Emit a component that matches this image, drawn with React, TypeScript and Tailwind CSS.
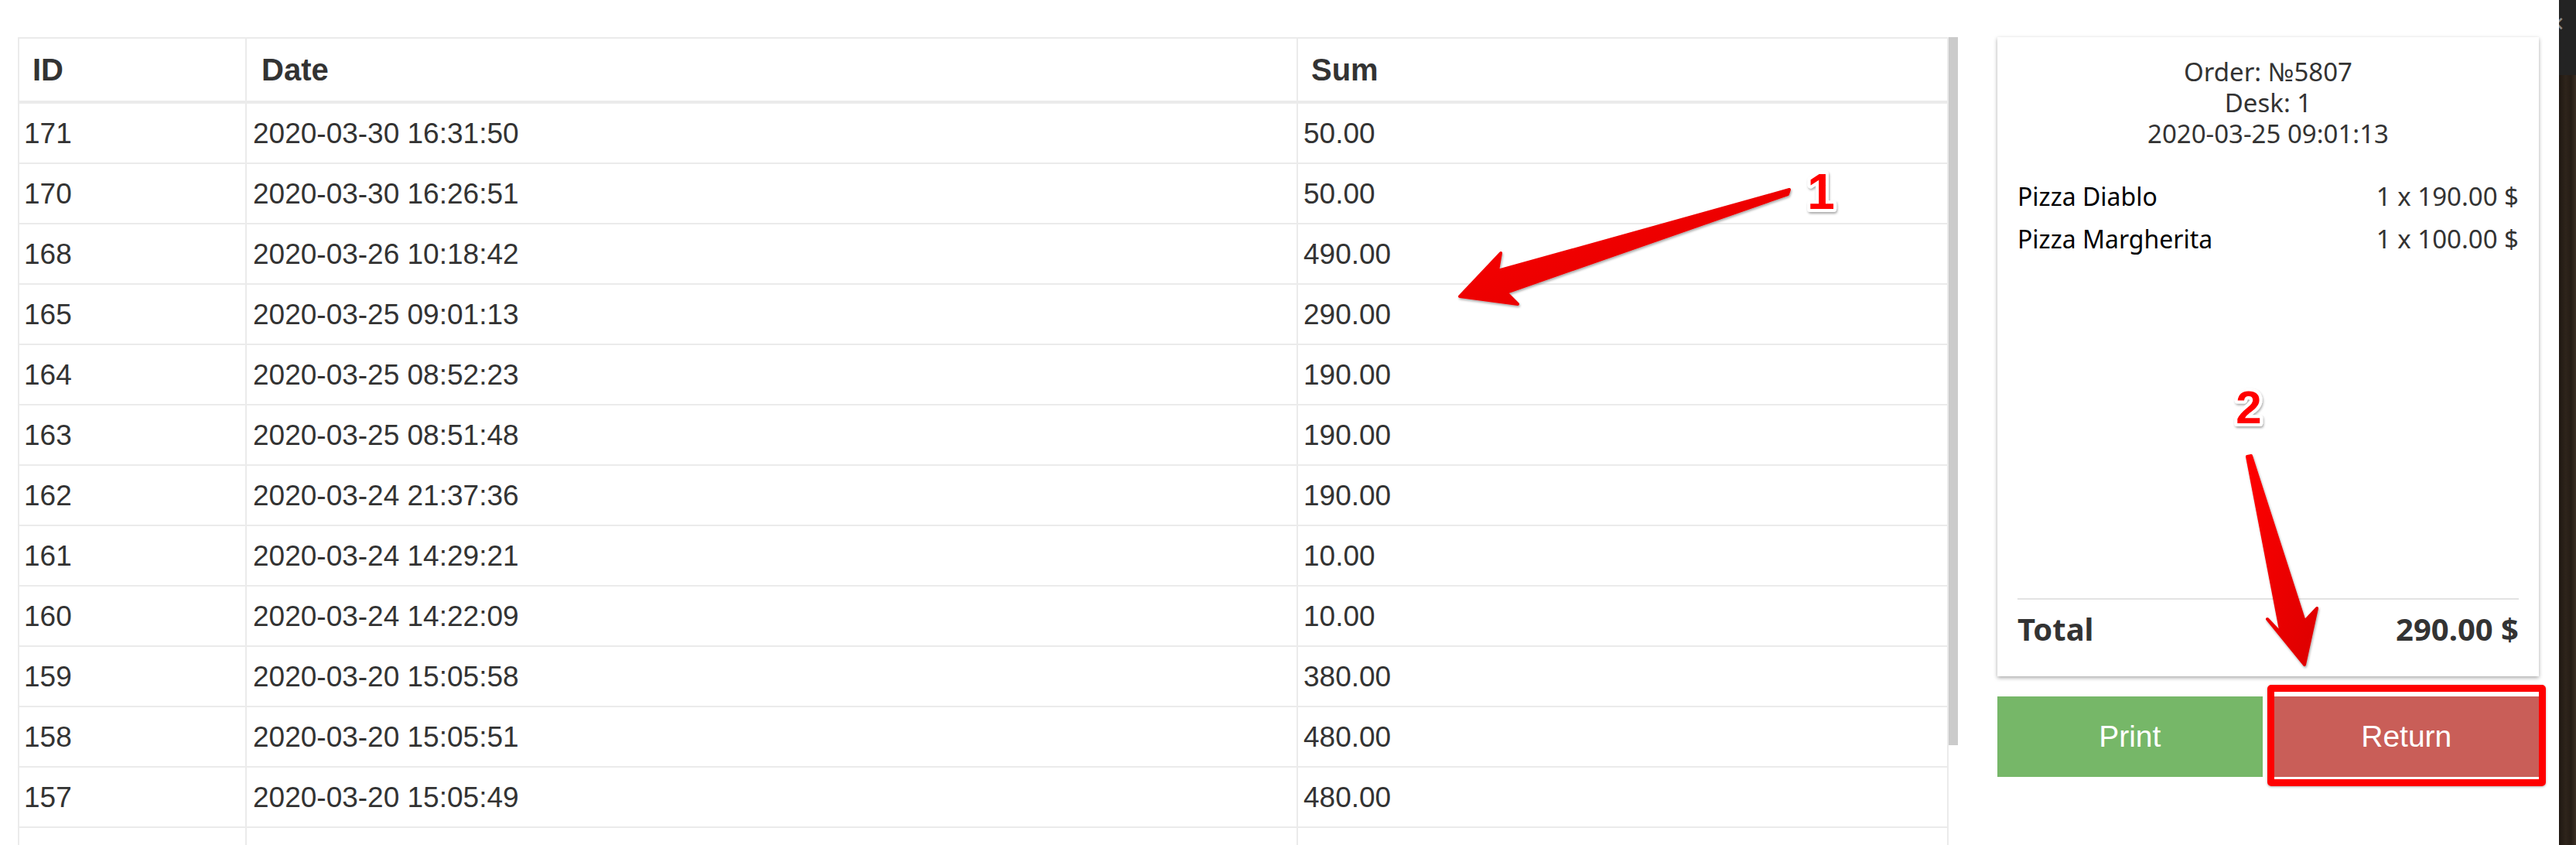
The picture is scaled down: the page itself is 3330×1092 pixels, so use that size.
const rows = [
  { id: '171', date: '2020-03-30 16:31:50', sum: '50.00' },
  { id: '170', date: '2020-03-30 16:26:51', sum: '50.00' },
  { id: '168', date: '2020-03-26 10:18:42', sum: '490.00' },
  { id: '165', date: '2020-03-25 09:01:13', sum: '290.00' },
  { id: '164', date: '2020-03-25 08:52:23', sum: '190.00' },
  { id: '163', date: '2020-03-25 08:51:48', sum: '190.00' },
  { id: '162', date: '2020-03-24 21:37:36', sum: '190.00' },
  { id: '161', date: '2020-03-24 14:29:21', sum: '10.00' },
  { id: '160', date: '2020-03-24 14:22:09', sum: '10.00' },
  { id: '159', date: '2020-03-20 15:05:58', sum: '380.00' },
  { id: '158', date: '2020-03-20 15:05:51', sum: '480.00' },
  { id: '157', date: '2020-03-20 15:05:49', sum: '480.00' },
  { id: '156', date: '2020-03-20 15:05:45', sum: '190.00' },
]

const items = [
  { name: 'Pizza Diablo', price: '1 x 190.00 $' },
  { name: 'Pizza Margherita', price: '1 x 100.00 $' },
]

function OrdersTable() {
  return (
    <div className="w-[2496px] border-x-2 border-t-2 border-[#ebebeb] text-[#333]">
      <div className="flex h-[84px] border-b-4 border-[#ebebeb] text-[40px] font-bold leading-none">
        <div className="flex w-[294px] items-center border-r-2 border-[#ebebeb] pl-[17px]">ID</div>
        <div className="flex w-[1359px] items-center border-r-2 border-[#ebebeb] pl-[19px]">Date</div>
        <div className="flex flex-1 items-center pl-[17px]">Sum</div>
      </div>
      {rows.map((r) => (
        <div key={r.id} className="flex h-[78px] border-b-2 border-[#ebebeb] text-[37px] leading-none">
          <div className="flex w-[294px] items-center border-r-2 border-[#ebebeb] pl-[6px]">{r.id}</div>
          <div className="flex w-[1359px] items-center border-r-2 border-[#ebebeb] pl-[8px]">{r.date}</div>
          <div className="flex flex-1 items-center pl-[7px]">{r.sum}</div>
        </div>
      ))}
    </div>
  )
}

function Receipt() {
  return (
    <div className="flex h-[826px] flex-col bg-white px-[26px] pt-[25px] pb-[37px] shadow-[0_2px_5px_rgba(0,0,0,0.35)] font-['Noto_Sans',sans-serif] text-[#333]">
      <div className="text-center text-[33px] leading-[40px]">
        <div>Order: №5807</div>
        <div>Desk: 1</div>
        <div>2020-03-25 09:01:13</div>
      </div>
      <div className="mt-[41px] flex flex-col gap-[15px] text-[33px] leading-[40px]">
        {items.map((it) => (
          <div key={it.name} className="flex items-baseline justify-between">
            <span className="text-[32px] text-black">{it.name}</span>
            <span>{it.price}</span>
          </div>
        ))}
      </div>
      <div className="mt-auto h-[2px] bg-[#e3e3e3]" />
      <div className="mt-[14px] flex justify-between text-[40px] font-bold leading-[48px]">
        <span>Total</span>
        <span>290.00 $</span>
      </div>
    </div>
  )
}

function Annotations() {
  return (
    <svg className="pointer-events-none absolute inset-0" width="3330" height="1092" viewBox="0 0 3330 1092">
      <defs>
        <linearGradient id="arrowRed" x1="0" y1="0" x2="1" y2="1">
          <stop offset="0" stopColor="#ff0000" />
          <stop offset="1" stopColor="#dc0000" />
        </linearGradient>
        <filter id="shadow" x="-20%" y="-20%" width="140%" height="140%">
          <feDropShadow dx="1" dy="2" stdDeviation="1.5" floodColor="#000" floodOpacity="0.35" />
        </filter>
      </defs>
      <g filter="url(#shadow)">
        <polygon
          points="2313,245 1936,350 1940,327 1887,383 1962,393 1947,378 2311,251"
          fill="url(#arrowRed)"
          stroke="url(#arrowRed)"
          strokeWidth="4"
          strokeLinejoin="round"
        />
        <polygon
          points="2905,590 2949,819 2931,800 2979,859 2995,786 2979,803 2910,589"
          fill="url(#arrowRed)"
          stroke="url(#arrowRed)"
          strokeWidth="4"
          strokeLinejoin="round"
        />
      </g>
      <g filter="url(#shadow)" fontFamily="'Liberation Sans', Arial, sans-serif" fontWeight="700" textAnchor="middle">
        <text x="2354" y="270" fontSize="64" fill="#ff0000" stroke="#ffffff" strokeWidth="8" paintOrder="stroke" strokeLinejoin="round">1</text>
        <text x="2907" y="547" fontSize="60" fill="#ff0000" stroke="#ffffff" strokeWidth="8" paintOrder="stroke" strokeLinejoin="round">2</text>
      </g>
    </svg>
  )
}

export default function App() {
  return (
    <div className="relative flex h-[1092px] w-[3330px] overflow-hidden bg-white font-['Liberation_Sans',Arial,sans-serif]">
      <div className="flex pl-[23px] pt-[48px]">
        <OrdersTable />
        <div className="w-[12px]">
          <div className="h-[915px] bg-[#cbcbcb]" />
        </div>
      </div>

      <div className="ml-[51px] w-[700px] pt-[48px]">
        <Receipt />
        <div className="mt-[26px] flex gap-[15px]">
          <button className="h-[104px] flex-1 bg-[#76b768] text-[39px] text-white">Print</button>
          <div className="relative flex-1">
            <button className="h-[104px] w-full bg-[#c95e58] text-[39px] text-white">Return</button>
            <div className="absolute -top-[15px] -right-[9px] -bottom-[12px] -left-[9px] rounded-[5px] border-[9px] border-[#ff0000] shadow-[0_1px_3px_rgba(0,0,0,0.3)]" />
          </div>
        </div>
      </div>

      <div className="ml-[26px] flex w-[22px] flex-col overflow-hidden">
        <div className="h-[97px] bg-[#232323] pt-[18px] text-[26px] leading-none text-[#8a8a8a]">
          <span className="-ml-[14px] block">✕</span>
        </div>
        <div className="flex-1 bg-[linear-gradient(90deg,#1f1812,#2e241b_40%,#251c15_70%,#3a2e24)]" />
      </div>

      <Annotations />
    </div>
  )
}
